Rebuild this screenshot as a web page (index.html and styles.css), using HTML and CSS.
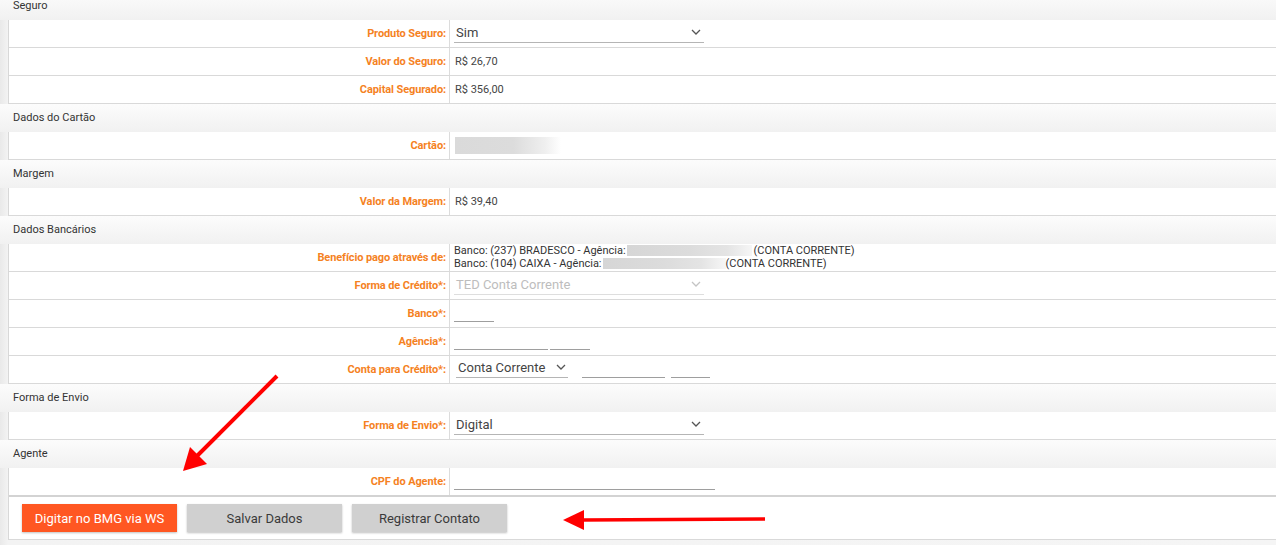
FILE: index.html
```html
<!DOCTYPE html>
<html lang="pt-BR">
<head>
<meta charset="utf-8">
<title>Proposta</title>
<link rel="stylesheet" href="styles.css">
</head>
<body>
<div class="page">
  <div class="section-head first">Seguro</div>
  <div class="group">
    <div class="row"><div class="label">Produto Seguro:</div><div class="value"><div class="select w250"><span>Sim</span><svg class="chev" viewBox="0 0 10 6"><path d="M1 1l4 4 4-4" /></svg></div></div></div>
    <div class="row"><div class="label">Valor do Seguro:</div><div class="value">R$ 26,70</div></div>
    <div class="row"><div class="label">Capital Segurado:</div><div class="value">R$ 356,00</div></div>
  </div>

  <div class="section-head">Dados do Cartão</div>
  <div class="group">
    <div class="row"><div class="label">Cartão:</div><div class="value"><span class="blur card"></span></div></div>
  </div>

  <div class="section-head">Margem</div>
  <div class="group">
    <div class="row"><div class="label">Valor da Margem:</div><div class="value">R$ 39,40</div></div>
  </div>

  <div class="section-head">Dados Bancários</div>
  <div class="group">
    <div class="row"><div class="label">Benefício pago através de:</div><div class="value lines">
      <div class="line">Banco: (237) BRADESCO - Agência: <span class="blur b1"></span> (CONTA CORRENTE)</div>
      <div class="line">Banco: (104) CAIXA - Agência: <span class="blur b2"></span>(CONTA CORRENTE)</div>
    </div></div>
    <div class="row"><div class="label">Forma de Crédito*:</div><div class="value"><div class="select w250 disabled"><span>TED Conta Corrente</span><svg class="chev" viewBox="0 0 10 6"><path d="M1 1l4 4 4-4" /></svg></div></div></div>
    <div class="row"><div class="label">Banco*:</div><div class="value"><span class="input w40"></span></div></div>
    <div class="row"><div class="label">Agência*:</div><div class="value gap2"><span class="input w94"></span><span class="input w40"></span></div></div>
    <div class="row"><div class="label">Conta para Crédito*:</div><div class="value"><div class="select w111 small"><span>Conta Corrente</span><svg class="chev" viewBox="0 0 10 6"><path d="M1 1l4 4 4-4" /></svg></div><span class="input w83 ml14"></span><span class="input w39 ml6"></span></div></div>
  </div>

  <div class="section-head">Forma de Envio</div>
  <div class="group">
    <div class="row"><div class="label">Forma de Envio*:</div><div class="value"><div class="select w250"><span>Digital</span><svg class="chev" viewBox="0 0 10 6"><path d="M1 1l4 4 4-4" /></svg></div></div></div>
  </div>

  <div class="section-head">Agente</div>
  <div class="group">
    <div class="row last"><div class="label">CPF do Agente:</div><div class="value"><span class="input w261"></span></div></div>
    <div class="actions">
      <button class="btn primary">Digitar no BMG via WS</button>
      <button class="btn">Salvar Dados</button>
      <button class="btn">Registrar Contato</button>
    </div>
  </div>

  <svg class="arrows" width="1276" height="545" viewBox="0 0 1276 545">
    <line x1="277" y1="376" x2="196" y2="457" stroke="#f00" stroke-width="4" />
    <polygon points="183,471 190,447 207,464" fill="#f00" />
    <line x1="765" y1="519" x2="582" y2="520" stroke="#f00" stroke-width="3.5" />
    <polygon points="563,520 584,510 584,530" fill="#f00" />
  </svg>
</div>
</body>
</html>
```

FILE: styles.css
```css
* { box-sizing: border-box; }
html, body { margin: 0; padding: 0; }
body {
  width: 1276px;
  height: 545px;
  overflow: hidden;
  background: linear-gradient(to right, #e9e9e9 0, #f3f3f3 8px, #f5f5f5 100%);
  font-family: Roboto, "Noto Sans", "Liberation Sans", sans-serif;
  color: #444;
}
.page {
  position: relative;
  padding-left: 8px;
  width: 1290px;
}
.section-head {
  height: 28px;
  line-height: 28px;
  margin-left: -8px;
  padding-left: 13px;
  font-size: 11px;
  color: #333;
  background: linear-gradient(#fcfcfc, #f1f1f1);
}
.section-head.first { margin-top: -8px; }
.group {
  background: #fff;
  border-left: 1px solid #d8d8d8;
}
.row {
  display: grid;
  grid-template-columns: 441px 1fr;
  height: 28px;
  border-bottom: 1px solid #d9d9d9;
}
.row.last { border-bottom: 2px solid #d3d3d3; height: 29px; }
.label {
  border-right: 1px solid #dcdcdc;
  text-align: right;
  padding-right: 3px;
  font-size: 11px;
  font-weight: 700;
  color: #f5821f;
  line-height: 27px;
  letter-spacing: -0.1px;
}
.value {
  display: flex;
  align-items: center;
  padding-left: 5px;
  font-size: 11px;
  color: #444;
}
.value.lines {
  flex-direction: column;
  align-items: flex-start;
  justify-content: flex-start;
  padding-left: 4px;
  line-height: 13px;
  color: #333;
}
.line { display: flex; align-items: center; height: 13px; white-space: nowrap; }
.blur {
  display: inline-block;
  background: linear-gradient(to right, #d6d6d6, #dcdcdc 50%, #e4e4e4 80%, #f6f6f6);
}
.blur.card {
  width: 106px;
  height: 17px;
  background: linear-gradient(to right, #dadada, #dcdcdc 55%, #efefef 85%, #fff);
}
.blur.b1 { width: 125px; height: 11px; margin: 0 2px 0 1px; }
.blur.b2 { width: 123px; height: 11px; margin-left: 1px; }
.select {
  position: relative;
  display: flex;
  align-items: center;
  align-self: flex-start;
  height: 22px;
  margin-top: 1px;
  margin-left: -1px;
  padding-left: 2px;
  padding-top: 2px;
  border-bottom: 1px solid #b5b5b5;
  font-size: 13px;
  color: #444;
}
.select.disabled { color: #bdbdbd; border-bottom-color: #dedede; }
.select.disabled .chev path { stroke: #c4c4c4; }
.select.small { margin-left: 1px; height: 21px; margin-top: 1px; padding-top: 1px; }
.chev {
  position: absolute;
  right: 3px;
  top: 8px;
  width: 10px;
  height: 6px;
}
.chev path { fill: none; stroke: #555; stroke-width: 1.3; }
.select.small .chev { right: 2px; top: 7px; }
.w250 { width: 250px; }
.w111 { width: 112px; }
.input {
  display: inline-block;
  align-self: flex-start;
  height: 22px;
  margin-left: -1px;
  border-bottom: 1px solid #9e9e9e;
}
.w40 { width: 40px; }
.w94 { width: 94px; }
.w83 { width: 83px; }
.w39 { width: 39px; }
.w261 { width: 261px; }
.gap2 { gap: 3px; }
.ml14 { margin-left: 14px; }
.ml6 { margin-left: 6px; }
.actions {
  display: flex;
  gap: 10px;
  height: 43px;
  padding: 7px 0 0 13px;
  border-bottom: 1px solid #d9d9d9;
}
.btn {
  width: 155px;
  height: 28px;
  border: 0;
  font-family: Roboto, "Noto Sans", "Liberation Sans", sans-serif;
  font-size: 13px;
  color: #3a3a3a;
  background: #d0d0d0;
  box-shadow: 0 1px 2px rgba(0,0,0,0.25);
  cursor: pointer;
}
.btn.primary { background: #ff5722; color: #fff; }
.arrows {
  position: absolute;
  left: 0;
  top: 8px;
  pointer-events: none;
}
```
